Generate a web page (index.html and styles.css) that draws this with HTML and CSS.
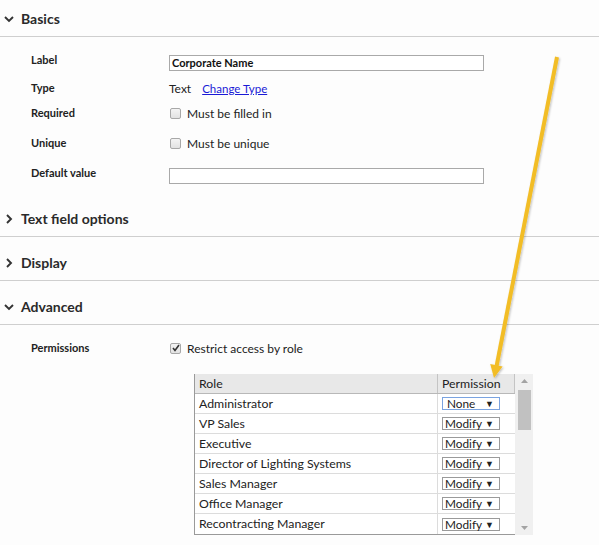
FILE: index.html
```html
<!DOCTYPE html>
<html>
<head>
<meta charset="utf-8">
<link rel="stylesheet" href="styles.css">
</head>
<body>
<div class="page">
  <div class="sec-head first">
    <svg class="chev" width="12" height="8" viewBox="0 0 12 8"><polyline points="2,2 6,6 10,2" /></svg>
    <span>Basics</span>
  </div>
  <div class="sec-body basics">
    <div class="field f-label">
      <div class="flabel">Label</div>
      <div class="input bold">Corporate Name</div>
    </div>
    <div class="field f-type">
      <div class="flabel">Type</div>
      <span class="val">Text</span><a class="link" href="#">Change Type</a>
    </div>
    <div class="field f-req">
      <div class="flabel">Required</div>
      <span class="cb"></span><span class="val">Must be filled in</span>
    </div>
    <div class="field f-uniq">
      <div class="flabel">Unique</div>
      <span class="cb"></span><span class="val">Must be unique</span>
    </div>
    <div class="field f-default">
      <div class="flabel">Default value</div>
      <div class="input"></div>
    </div>
  </div>

  <div class="sec-head">
    <svg class="chev" width="12" height="12" viewBox="0 0 12 12"><polyline points="4,2 8,6 4,10" /></svg>
    <span>Text field options</span>
  </div>
  <div class="sec-head">
    <svg class="chev" width="12" height="12" viewBox="0 0 12 12"><polyline points="4,2 8,6 4,10" /></svg>
    <span>Display</span>
  </div>
  <div class="sec-head">
    <svg class="chev" width="12" height="8" viewBox="0 0 12 8"><polyline points="2,2 6,6 10,2" /></svg>
    <span>Advanced</span>
  </div>
  <div class="sec-body advanced">
    <div class="field f-perm">
      <div class="flabel">Permissions</div>
      <span class="cb checked"><svg width="8" height="8" viewBox="0 0 8 8"><polyline points="1,4 3,6.5 7,1" /></svg></span><span class="val">Restrict access by role</span>
    </div>
    <div class="grid-wrap">
      <div class="grid">
        <div class="grow ghead"><div class="c-role">Role</div><div class="c-perm">Permission</div></div>
        <div class="grow"><div class="c-role">Administrator</div><div class="c-perm"><span class="sel focus"><span>None</span><i>▼</i></span></div></div>
        <div class="grow"><div class="c-role">VP Sales</div><div class="c-perm"><span class="sel"><span>Modify</span><i>▼</i></span></div></div>
        <div class="grow"><div class="c-role">Executive</div><div class="c-perm"><span class="sel"><span>Modify</span><i>▼</i></span></div></div>
        <div class="grow"><div class="c-role">Director of Lighting Systems</div><div class="c-perm"><span class="sel"><span>Modify</span><i>▼</i></span></div></div>
        <div class="grow"><div class="c-role">Sales Manager</div><div class="c-perm"><span class="sel"><span>Modify</span><i>▼</i></span></div></div>
        <div class="grow"><div class="c-role">Office Manager</div><div class="c-perm"><span class="sel"><span>Modify</span><i>▼</i></span></div></div>
        <div class="grow last"><div class="c-role">Recontracting Manager</div><div class="c-perm"><span class="sel"><span>Modify</span><i>▼</i></span></div></div>
      </div>
      <div class="sbar">
        <svg class="sarrow" width="17" height="14" viewBox="0 0 17 14"><polygon points="5,9 12,9 8.5,5" /></svg>
        <div class="thumb"></div>
        <div class="sfill"></div>
        <svg class="sarrow" width="17" height="14" viewBox="0 0 17 14"><polygon points="5,5 12,5 8.5,9" /></svg>
      </div>
    </div>
  </div>

  <svg class="arrow" width="599" height="545" viewBox="0 0 599 545">
    <defs>
      <filter id="sh" x="-20%" y="-5%" width="140%" height="110%">
        <feDropShadow dx="1" dy="1" stdDeviation="1.2" flood-color="#000" flood-opacity="0.25"/>
      </filter>
    </defs>
    <g filter="url(#sh)">
      <line x1="557" y1="57" x2="496.6" y2="366" stroke="#f2bd27" stroke-width="4" />
      <polygon points="494,378 502.6,366.5 490.2,364" fill="#f2bd27" />
    </g>
  </svg>
</div>
</body>
</html>
```

FILE: styles.css
```css
html, body {
  margin: 0;
  padding: 0;
  background: #fdfdfd;
}
body {
  font-family: Lato, "Open Sans", sans-serif;
  color: #222;
  width: 599px;
  height: 545px;
  overflow: hidden;
}
.page {
  position: relative;
  width: 599px;
  height: 545px;
}
.sec-head {
  display: flex;
  align-items: center;
  height: 43px;
  box-sizing: content-box;
  padding: 0;
  border-bottom: 1px solid #cfcfcf;
  font-size: 14px;
  font-weight: 700;
  color: #2a2a2a;
}
.sec-head span {
  margin-top: 9px;
  line-height: 18px;
}
.sec-head .chev {
  margin-left: 3px;
  margin-right: 6px;
  margin-top: 9px;
  fill: none;
  stroke: #333;
  stroke-width: 1.9;
}
.sec-head.first {
  height: 36px;
}
.sec-head.first span,
.sec-head.first .chev {
  margin-top: 2px;
}
.sec-body {
  padding-left: 31px;
}
.basics {
  padding-top: 15px;
  padding-bottom: 6px;
}
.field {
  display: flex;
  align-items: center;
  height: 20px;
}
.flabel {
  width: 138px;
  flex: none;
  font-size: 11px;
  font-weight: 700;
  line-height: 16px;
  color: #222;
}
.f-label, .f-default {
  align-items: flex-start;
  height: 22px;
}
.f-label .input, .f-default .input {
  margin-top: 3px;
}
.f-type { margin-top: 4px; }
.f-req { margin-top: 5px; }
.f-uniq { margin-top: 10px; }
.f-default { margin-top: 12px; }
.input {
  width: 315px;
  height: 16px;
  box-sizing: border-box;
  border: 1px solid #a9a9a9;
  background: #fff;
  font-size: 11px;
  line-height: 14px;
  padding-left: 2px;
  color: #111;
}
.bold { font-weight: 700; }
.val {
  font-size: 12px;
  color: #222;
}
.link {
  margin-left: 11px;
  font-size: 11.5px;
  color: #1a1ad6;
  text-decoration: underline;
}
.cb {
  width: 9px;
  height: 9px;
  border: 1px solid #a8a8a8;
  border-radius: 2px;
  background: linear-gradient(#f4f4f4, #e2e2e2);
  margin-left: 1px;
  margin-right: 6px;
  display: flex;
  align-items: center;
  justify-content: center;
}
.cb svg {
  fill: none;
  stroke: #333;
  stroke-width: 1.6;
}
.advanced {
  padding-top: 13px;
}
.grid-wrap {
  display: flex;
  margin-top: 16px;
  margin-left: 163px;
  width: 339px;
  height: 161px;
}
.grid {
  width: 321px;
  border-left: 1px solid #9a9a9a;
  border-bottom: 1px solid #9a9a9a;
  box-sizing: border-box;
  background: #fff;
}
.grow {
  display: flex;
  height: 20px;
  box-sizing: border-box;
  border-bottom: 1px solid #dcdcdc;
  font-size: 12.3px;
  line-height: 19px;
}
.grow.last {
  border-bottom: none;
}
.ghead {
  background: #e8e8e8;
  border-bottom: 1px solid #b8b8b8;
}
.c-role {
  width: 243px;
  flex: none;
  padding-left: 4px;
  box-sizing: border-box;
  border-right: 1px solid #dcdcdc;
}
.ghead .c-role {
  border-right-color: #c4c4c4;
}
.c-perm {
  width: 77px;
  flex: none;
  padding-left: 4px;
  box-sizing: border-box;
  display: flex;
  align-items: center;
}
.ghead .c-perm {
  border-right: 1px solid #c4c4c4;
}
.sel {
  width: 58px;
  height: 13px;
  box-sizing: border-box;
  border: 1px solid #9a9a9a;
  display: flex;
  align-items: center;
  justify-content: space-between;
  padding: 0 5px 0 2px;
  font-size: 11.8px;
  line-height: 11px;
  background: #fff;
}
.sel.focus {
  border-color: #7aa3e0;
}
.sel.focus span {
  padding-left: 2px;
}
.sel i {
  font-style: normal;
  font-size: 9px;
  color: #222;
}
.sbar {
  width: 18px;
  background: #f0f0f0;
  display: flex;
  flex-direction: column;
  align-items: center;
}
.sarrow {
  fill: #a3a3a3;
  flex: none;
}
.thumb {
  width: 13px;
  height: 40px;
  background: #c1c1c1;
  margin-top: 2px;
  flex: none;
}
.sfill {
  flex: 1;
}
.arrow {
  position: absolute;
  left: 0;
  top: 0;
  pointer-events: none;
}
```
